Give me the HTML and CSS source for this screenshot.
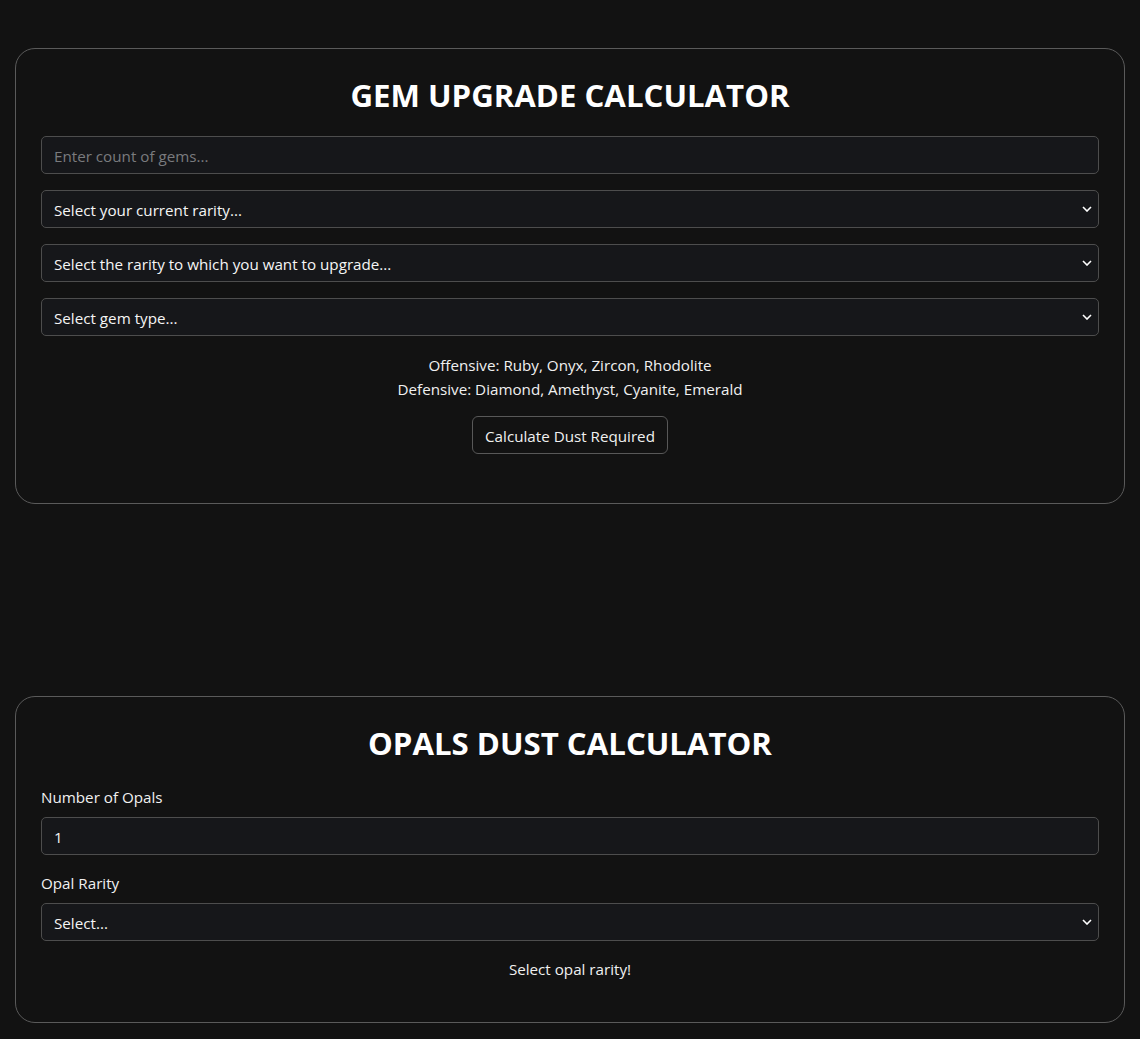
FILE: index.html
```html
<!DOCTYPE html>
<html lang="en">
<head>
<meta charset="utf-8">
<title>Gem Calculators</title>
<link rel="stylesheet" href="styles.css">
</head>
<body>
<main class="page">
  <section class="card">
    <h1 class="card-title">GEM UPGRADE CALCULATOR</h1>
    <div class="fields">
      <input class="field" type="text" placeholder="Enter count of gems...">
      <div class="select-wrap">
        <select class="field select"><option>Select your current rarity...</option></select>
        <svg class="chevron" viewBox="0 0 10 6" width="10" height="6"><path d="M1 1 L5 5 L9 1" fill="none" stroke="#fff" stroke-width="1.6"/></svg>
      </div>
      <div class="select-wrap">
        <select class="field select"><option>Select the rarity to which you want to upgrade...</option></select>
        <svg class="chevron" viewBox="0 0 10 6" width="10" height="6"><path d="M1 1 L5 5 L9 1" fill="none" stroke="#fff" stroke-width="1.6"/></svg>
      </div>
      <div class="select-wrap">
        <select class="field select"><option>Select gem type...</option></select>
        <svg class="chevron" viewBox="0 0 10 6" width="10" height="6"><path d="M1 1 L5 5 L9 1" fill="none" stroke="#fff" stroke-width="1.6"/></svg>
      </div>
    </div>
    <p class="info">Offensive: Ruby, Onyx, Zircon, Rhodolite<br>Defensive: Diamond, Amethyst, Cyanite, Emerald</p>
    <div class="actions"><button class="btn" type="button">Calculate Dust Required</button></div>
    <div class="result"></div>
  </section>

  <section class="card card-second">
    <h1 class="card-title">OPALS DUST CALCULATOR</h1>
    <label class="label">Number of Opals</label>
    <input class="field" type="text" value="1">
    <label class="label">Opal Rarity</label>
    <div class="select-wrap">
      <select class="field select"><option>Select...</option></select>
      <svg class="chevron" viewBox="0 0 10 6" width="10" height="6"><path d="M1 1 L5 5 L9 1" fill="none" stroke="#fff" stroke-width="1.6"/></svg>
    </div>
    <p class="status">Select opal rarity!</p>
  </section>
</main>
</body>
</html>
```

FILE: styles.css
```css
* { box-sizing: border-box; }

html, body {
  margin: 0;
  background: #121212;
  color: #f0f0f0;
  font-family: "Open Sans", "Noto Sans", sans-serif;
  font-size: 15.2px;
}

.page {
  padding: 48px 15px 15px;
  display: flex;
  flex-direction: column;
  gap: 192px;
}

.card {
  border: 1px solid #5a5a5a;
  border-radius: 20px;
  padding: 27px 25px 25px;
  display: flex;
  flex-direction: column;
}

.card-title {
  margin: 0 0 22px;
  font-size: 31.2px;
  line-height: 38px;
  font-weight: 700;
  text-align: center;
  color: #fff;
}

.fields {
  display: flex;
  flex-direction: column;
  gap: 16px;
}

.field {
  display: block;
  width: 100%;
  height: 38px;
  padding: 1px 12px 0;
  background: #16171a;
  border: 1px solid #4d4d4d;
  border-radius: 5px;
  color: #f5f5f5;
  font: inherit;
  outline: none;
}

.field::placeholder { color: #7a7b7e; }

.select-wrap { position: relative; }

.select {
  appearance: none;
  -webkit-appearance: none;
}

.chevron {
  position: absolute;
  right: 7px;
  top: 16px;
  pointer-events: none;
}

.info {
  margin: 16px 0 0;
  padding-top: 1px;
  text-align: center;
  line-height: 24px;
}

.actions {
  display: flex;
  justify-content: center;
  margin-top: 15px;
}

.btn {
  height: 38px;
  padding: 1px 12px 0;
  background: #121212;
  border: 1px solid #585858;
  border-radius: 6px;
  color: #f0f0f0;
  font: inherit;
}

.result { height: 24px; }

.label {
  display: block;
  margin: 0 0 8px;
  padding-top: 1px;
  line-height: 24px;
}

.label ~ .label { margin-top: 15px; }

.status {
  margin: 15px 0 16px;
  padding-top: 1px;
  text-align: center;
  line-height: 24px;
}
```
